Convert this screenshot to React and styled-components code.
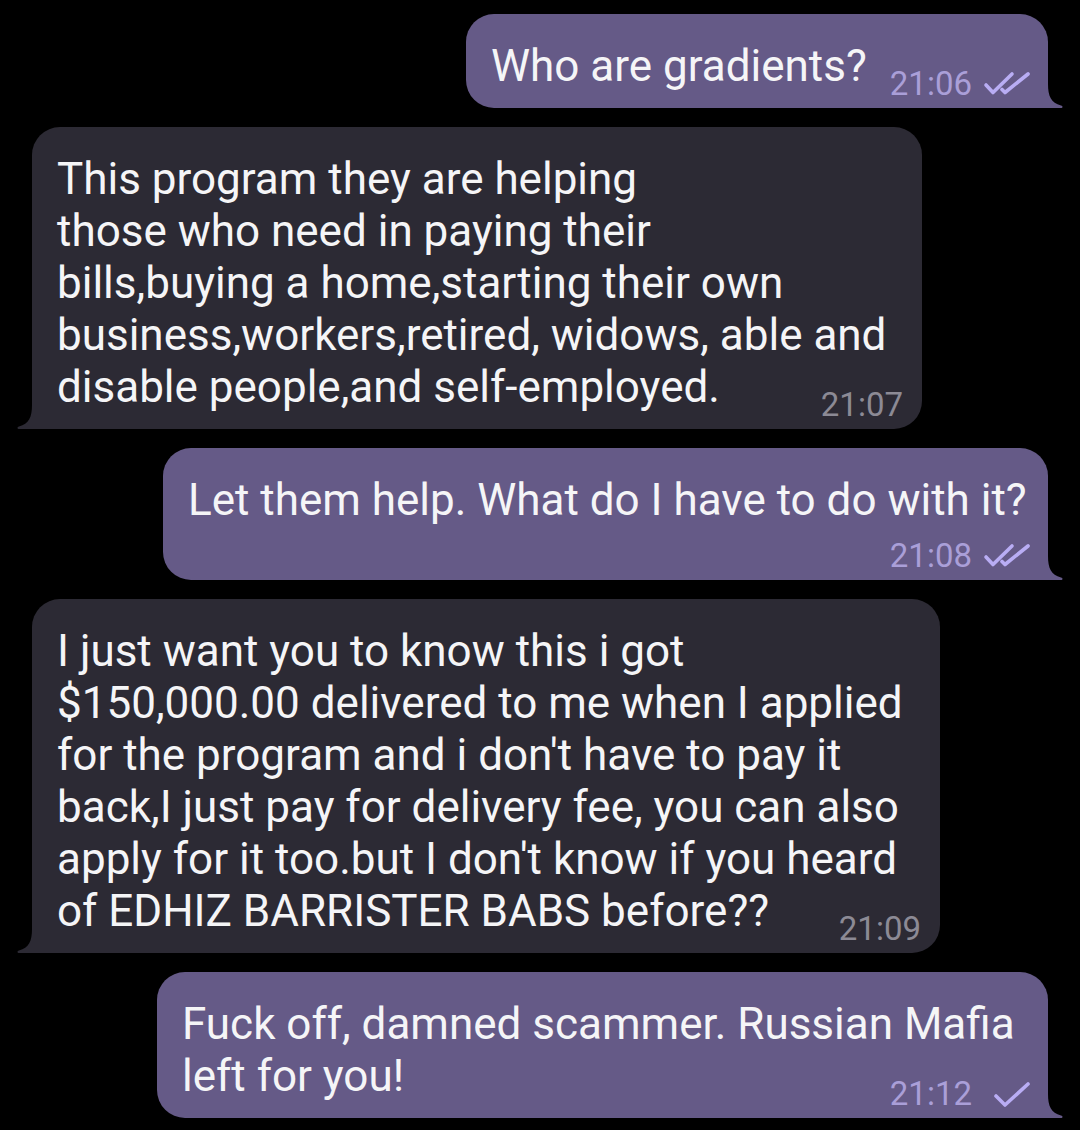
import React from 'react'
import styled, { createGlobalStyle } from 'styled-components'

const GlobalStyle = createGlobalStyle`
  html, body {
    margin: 0;
    background: #000;
  }
  body {
    font-family: Roboto, 'Noto Sans', sans-serif;
    -webkit-font-smoothing: antialiased;
  }
`

const Chat = styled.div`
  width: 1080px;
  box-sizing: border-box;
  display: flex;
  flex-direction: column;
  gap: 19px;
  padding: 14px 32px;
`

const Row = styled.div`
  display: flex;
  justify-content: ${({ $out }) => ($out ? 'flex-end' : 'flex-start')};
`

const Bubble = styled.div`
  position: relative;
  display: grid;
  box-sizing: border-box;
  width: ${({ $w }) => $w}px;
  padding: 26px 14px 16px 25px;
  background: ${({ $out }) => ($out ? '#655a87' : '#2c2a34')};
  border-radius: ${({ $out }) => ($out ? '28px 28px 0 28px' : '28px 28px 28px 0')};
`

const Text = styled.div`
  grid-area: 1 / 1;
  display: flow-root;
  font-size: 44px;
  line-height: 52px;
  color: #f5f5f7;
`

const Spacer = styled.span`
  float: right;
  width: ${({ $out }) => ($out ? 150 : 92)}px;
  height: 38px;
`

const Meta = styled.div`
  grid-area: 1 / 1;
  align-self: end;
  justify-self: end;
  display: inline-flex;
  align-items: center;
  gap: 11px;
  margin: 0 ${({ $out }) => ($out ? 3 : 5)}px -8px 0;
  font-size: 33px;
  line-height: 33px;
  color: ${({ $out }) => ($out ? '#aa9fd8' : '#8c8a95')};
`

const Ticks = styled.svg`
  width: 48px;
  height: 26px;
  fill: none;
  stroke: #b9adf4;
  stroke-width: 3.6;
  stroke-linecap: round;
  stroke-linejoin: round;
`

const Tail = styled.svg`
  position: absolute;
  bottom: 0;
  width: 16px;
  height: 24px;
  fill: ${({ $out }) => ($out ? '#655a87' : '#2c2a34')};
  ${({ $out }) => ($out ? 'right: -15px;' : 'left: -15px; transform: scaleX(-1);')}
`

const messages = [
  { out: true, w: 582, time: '21:06', ticks: 2, lines: ['Who are gradients?'] },
  {
    out: false,
    w: 890,
    time: '21:07',
    lines: [
      'This program they are helping',
      'those who need in paying their',
      'bills,buying a home,starting their own',
      'business,workers,retired, widows, able and',
      'disable people,and self-employed.',
    ],
  },
  { out: true, w: 885, time: '21:08', ticks: 2, lines: ['Let them help. What do I have to do with it?'] },
  {
    out: false,
    w: 908,
    time: '21:09',
    lines: [
      'I just want you to know this i got',
      '$150,000.00 delivered to me when I applied',
      "for the program and i don't have to pay it",
      'back,I just pay for delivery fee, you can also',
      "apply for it too.but I don't know if you heard",
      'of EDHIZ BARRISTER BABS before??',
    ],
  },
  {
    out: true,
    w: 891,
    time: '21:12',
    ticks: 1,
    lines: ['Fuck off, damned scammer. Russian Mafia', 'left for you!'],
  },
]

const Check = ({ count }) => (
  <Ticks viewBox="0 0 48 26">
    {count === 2 ? (
      <>
        <path d="M3 14 L10 21.5 L29 3" />
        <path d="M19 18.5 L22 21.5 L45 3" />
      </>
    ) : (
      <path d="M13 15 L22 24 L45 3" />
    )}
  </Ticks>
)

const Message = ({ msg }) => (
  <Row $out={msg.out}>
    <Bubble $out={msg.out} $w={msg.w}>
      <Text>
        {msg.lines.map((line, i) => (
          <React.Fragment key={i}>
            {i > 0 && <br />}
            {line}
          </React.Fragment>
        ))}{' '}
        <Spacer $out={msg.out} />
      </Text>
      <Meta $out={msg.out}>
        <span>{msg.time}</span>
        {msg.ticks && <Check count={msg.ticks} />}
      </Meta>
      <Tail $out={msg.out} viewBox="0 0 16 24">
        <path d="M0 0 H1 C1 12 4 19 14 21.5 C16 22 16 24 14 24 H0 Z" />
      </Tail>
    </Bubble>
  </Row>
)

export default function App() {
  return (
    <>
      <GlobalStyle />
      <Chat>
        {messages.map((m, i) => (
          <Message key={i} msg={m} />
        ))}
      </Chat>
    </>
  )
}
